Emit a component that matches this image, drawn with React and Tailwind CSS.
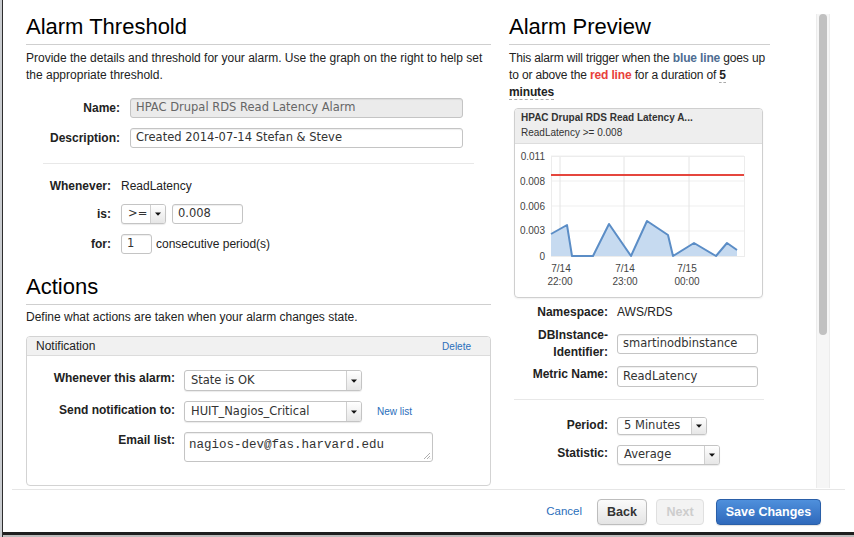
import React from 'react';

const inputFont = "font-['DejaVu_Sans',sans-serif]";

// text box look-alike
const Field = ({ value, className = '', disabled }) => (
  <div
    className={`flex items-center border border-[#c4c4c4] rounded-[3px] pl-[5px] text-[11.5px] ${inputFont} shadow-[inset_0_1px_1px_rgba(0,0,0,0.07)] whitespace-nowrap overflow-hidden ${
      disabled ? 'bg-[#ebebeb] text-[#666]' : 'bg-white text-[#333]'
    } ${className}`}
  >
    {value}
  </div>
);

// select look-alike with the small arrow box on the right
const Select = ({ value, className = '' }) => (
  <div className={`flex border border-[#c4c4c4] rounded-[3px] bg-white shadow-[0_1px_1px_rgba(0,0,0,0.08)] overflow-hidden ${className}`}>
    <div className={`flex-1 flex items-center pl-[6px] text-[11.5px] text-[#333] whitespace-nowrap ${inputFont}`}>{value}</div>
    <div className="w-[15px] flex items-center justify-center border-l border-[#cfcfcf] bg-gradient-to-b from-[#ffffff] to-[#e6e6e6]">
      <svg width="6" height="4" viewBox="0 0 6 4">
        <path d="M0 0.5h6L3 3.8z" fill="#111" />
      </svg>
    </div>
  </div>
);

const Label = ({ children, className = '' }) => (
  <div className={`text-right font-bold text-[12px] leading-[17px] text-[#222] shrink-0 ${className}`}>{children}</div>
);

const pts = '36,90 52,81 57,112 78,112 94,80 116,112 132,77 153,91 158,112 179,99 201,112 212,99 222,106';

const Chart = () => (
  <svg width="248" height="153" className="block">
    {[12, 37, 62, 87].map((y) => (
      <line key={y} x1="36" x2="229" y1={y} y2={y} stroke="#efefef" />
    ))}
    {[45, 109, 174].map((x) => (
      <line key={x} x1={x} x2={x} y1="12" y2="112" stroke="#e4e4e4" />
    ))}
    <rect x="36.5" y="12.5" width="193" height="100" fill="none" stroke="#ececec" />
    <polygon points={`36,112 ${pts} 222,112`} fill="#c6daf0" />
    <polyline points={pts} fill="none" stroke="#5b8dc6" strokeWidth="2" strokeLinejoin="round" />
    <line x1="36" x2="229" y1="31" y2="31" stroke="#e5463d" strokeWidth="2" />
    <g fontSize="10" fill="#444" fontFamily="Liberation Sans, Arial, sans-serif" textAnchor="end">
      <text x="30" y="15.5">0.011</text>
      <text x="30" y="41">0.008</text>
      <text x="30" y="65.5">0.006</text>
      <text x="30" y="90">0.003</text>
      <text x="30" y="115.5">0</text>
    </g>
    <g fontSize="10" fill="#444" fontFamily="Liberation Sans, Arial, sans-serif" textAnchor="middle">
      <text x="46" y="127.5">7/14</text>
      <text x="45" y="141">22:00</text>
      <text x="110" y="127.5">7/14</text>
      <text x="110" y="141">23:00</text>
      <text x="172" y="127.5">7/15</text>
      <text x="172" y="141">00:00</text>
    </g>
  </svg>
);

export default function App() {
  return (
    <div className="w-[854px] h-[537px] flex bg-white overflow-hidden font-['Liberation_Sans',Arial,sans-serif] text-[#222]">
      {/* window edge */}
      <div className="w-[2px] bg-[#c9ccd0]" />
      <div className="w-px bg-[#2e2e2e]" />

      <div className="flex-1 flex flex-col">
        <div className="h-[489px] flex pl-[23px] overflow-hidden">
          {/* Left column */}
          <div className="w-[465px] flex flex-col shrink-0">
            <h2 className="mt-[14px] text-[22px] leading-[26px] pb-[4px] border-b border-[#cfcfcf] text-black">Alarm Threshold</h2>
            <p className="mt-[5px] text-[12px] leading-[17px]">
              Provide the details and threshold for your alarm. Use the graph on the right to help set the appropriate threshold.
            </p>

            <div className="mt-[14px] flex flex-col gap-[10px]">
              <div className="flex items-center">
                <Label className="w-[94px]">Name:</Label>
                <Field className="ml-[10px] w-[333px] h-[20px]" value="HPAC Drupal RDS Read Latency Alarm" disabled />
              </div>
              <div className="flex items-center">
                <Label className="w-[94px]">Description:</Label>
                <Field className="ml-[10px] w-[333px] h-[20px]" value="Created 2014-07-14 Stefan & Steve" />
              </div>
            </div>

            <div className="mx-[17px] mt-[15px] border-t border-[#e8e8e8]" />

            <div className="mt-[14px] flex items-center">
              <Label className="w-[85px]">Whenever:</Label>
              <span className="ml-[10px] text-[12px] leading-[17px]">ReadLatency</span>
            </div>
            <div className="mt-[9px] flex items-center">
              <Label className="w-[85px]">is:</Label>
              <Select className="ml-[10px] w-[45px] h-[20px]" value=">=" />
              <Field className="ml-[6px] w-[71px] h-[20px]" value="0.008" />
            </div>
            <div className="mt-[10px] flex items-center">
              <Label className="w-[85px]">for:</Label>
              <Field className="ml-[10px] w-[31px] h-[20px]" value="1" />
              <span className="ml-[4px] text-[12px]">consecutive period(s)</span>
            </div>

            <h2 className="mt-[20px] text-[22px] leading-[26px] pb-[4px] border-b border-[#cfcfcf] text-black">Actions</h2>
            <p className="mt-[4px] text-[12px] leading-[17px]">Define what actions are taken when your alarm changes state.</p>

            {/* Notification box */}
            <div className="mt-[10px] border border-[#d3d3d3] rounded-[4px] overflow-hidden">
              <div className="h-[19px] flex items-center justify-between px-[9px] bg-[#f1f1f1] border-b border-[#dcdcdc]">
                <span className="text-[12px]">Notification</span>
                <span className="text-[10px] text-[#2a6ebb] mr-[10px]">Delete</span>
              </div>
              <div className="pt-[14px] pb-[23px] flex flex-col gap-[10px]">
                <div className="flex items-start">
                  <Label className="w-[148px] text-[12.5px]">Whenever this alarm:</Label>
                  <Select className="ml-[9px] w-[178px] h-[21px]" value="State is OK" />
                </div>
                <div className="flex items-center">
                  <Label className="w-[148px] text-[12.5px] -mt-[3px]">Send notification to:</Label>
                  <Select className="ml-[9px] w-[178px] h-[21px]" value="HUIT_Nagios_Critical" />
                  <span className="ml-[15px] text-[10px] text-[#2a6ebb]">New list</span>
                </div>
                <div className="flex items-start">
                  <Label className="w-[148px] text-[12.5px]">Email list:</Label>
                  <div className="relative ml-[9px] w-[249px] h-[30px] border border-[#c4c4c4] rounded-[3px] bg-white shadow-[inset_0_1px_1px_rgba(0,0,0,0.07)] pl-[4px] pt-[5px] text-[12.5px] leading-[15px] text-[#333] font-['Liberation_Mono',monospace]">
                    nagios-dev@fas.harvard.edu
                    <svg className="absolute right-[1px] bottom-[1px]" width="8" height="8" viewBox="0 0 8 8">
                      <path d="M7 1L1 7M7 4L4 7M7 6.5L6.5 7" stroke="#999" strokeWidth="0.8" />
                    </svg>
                  </div>
                </div>
              </div>
            </div>
          </div>

          {/* Right column */}
          <div className="ml-[18px] w-[261px] flex flex-col shrink-0">
            <h2 className="mt-[14px] text-[22px] leading-[26px] pb-[4px] border-b border-[#cfcfcf] text-black">Alarm Preview</h2>
            <p className="mt-[5px] text-[12px] leading-[17px] tracking-[-0.15px]">
              This alarm will trigger when the <b className="text-[#4e6d92]">blue line</b> goes up to or above the{' '}
              <b className="text-[#e8413a]">red line</b> for a duration of{' '}
              <b className="border-b border-dashed border-[#aaa]">5 minutes</b>
            </p>

            <div className="mt-[7px] ml-[5px] w-[249px] border border-[#cfcfcf] rounded-[4px] overflow-hidden shadow-[0_1px_2px_rgba(0,0,0,0.06)]">
              <div className="bg-[#eeeeee] border-b border-[#dddddd] pl-[6px] pt-[1px] pb-[3px] text-[10px] leading-[15px]">
                <div className="font-bold text-[#333]">HPAC Drupal RDS Read Latency A...</div>
                <div className="text-[#333]">ReadLatency &gt;= 0.008</div>
              </div>
              <Chart />
            </div>

            <div className="mt-[6px] flex items-center">
              <Label className="w-[99px] text-[11.5px]">Namespace:</Label>
              <span className="ml-[9px] text-[12px] leading-[17px]">AWS/RDS</span>
            </div>
            <div className="mt-[6px] flex items-center">
              <Label className="w-[99px] text-[11.5px] leading-[16.5px]">
                DBInstance-
                <br />
                Identifier:
              </Label>
              <Field className="ml-[9px] w-[141px] h-[20px]" value="smartinodbinstance" />
            </div>
            <div className="mt-[5px] flex items-start">
              <Label className="w-[99px] text-[11.5px]">Metric Name:</Label>
              <Field className="ml-[9px] w-[141px] h-[21px]" value="ReadLatency" />
            </div>

            <div className="mt-[12px] ml-[5px] w-[250px] border-t border-[#e8e8e8]" />

            <div className="mt-[17px] flex items-start">
              <Label className="w-[99px] text-[12.5px]">Period:</Label>
              <Select className="ml-[9px] w-[90px] h-[18px]" value="5 Minutes" />
            </div>
            <div className="mt-[10px] flex items-start">
              <Label className="w-[99px] text-[12.5px]">Statistic:</Label>
              <Select className="ml-[9px] w-[103px] h-[20px]" value="Average" />
            </div>
          </div>

          {/* scrollbar */}
          <div className="ml-[46px] mt-[14px] w-[14px] h-[474px] bg-[#f6f6f6] border-x border-[#ececec] flex justify-center shrink-0">
            <div className="w-[8px] h-[321px] rounded-full bg-[#c1c1c1]" />
          </div>
        </div>

        {/* footer */}
        <div className="mx-[9px] border-t border-[#e6e6e6]">
          <div className="h-[42px] pt-[9px] pr-[24px] flex items-start justify-end">
            <div className="h-[26px] flex items-center">
              <span className="mr-[15px] text-[11.5px] text-[#2a6ebb]">Cancel</span>
              <div className="w-[50px] h-[26px] flex items-center justify-center border border-[#bdbdbd] rounded-[4px] bg-gradient-to-b from-[#fbfbfb] to-[#e4e4e4] text-[12.5px] font-bold text-[#333] shadow-[0_1px_1px_rgba(0,0,0,0.06)]">
                Back
              </div>
              <div className="ml-[9px] w-[48px] h-[26px] flex items-center justify-center border border-[#e0e0e0] rounded-[4px] bg-[#f3f3f3] text-[12.5px] font-bold text-[#cdcdcd]">
                Next
              </div>
              <div className="ml-[12px] w-[105px] h-[26px] flex items-center justify-center border border-[#2a5fa8] rounded-[4px] bg-gradient-to-b from-[#4f90dc] to-[#2f69bb] text-[12.5px] font-bold text-white shadow-[0_1px_1px_rgba(0,0,0,0.12)]">
                Save Changes
              </div>
            </div>
          </div>
        </div>
        <div className="h-[3px] bg-[#1f1f1f]" />
        <div className="h-[2px] bg-[#bcbcbc]" />
      </div>
    </div>
  );
}
